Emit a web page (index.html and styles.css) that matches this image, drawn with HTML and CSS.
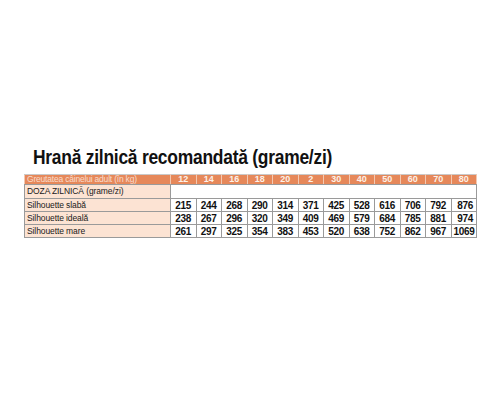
FILE: index.html
```html
<!DOCTYPE html>
<html lang="ro">
<head>
<meta charset="utf-8">
<title>Hrană zilnică recomandată</title>
<link rel="stylesheet" href="styles.css">
</head>
<body>
<div class="page">
  <h1 class="title">Hrană zilnică recomandată (grame/zi)</h1>
  <table class="feed">
    <colgroup>
      <col class="c-label">
      <col span="12" class="c-num">
    </colgroup>
    <thead>
      <tr class="head">
        <th class="label">Greutatea câinelui adult (în kg)</th>
        <th>12</th><th>14</th><th>16</th><th>18</th><th>20</th><th>2</th><th>30</th><th>40</th><th>50</th><th>60</th><th>70</th><th>80</th>
      </tr>
    </thead>
    <tbody>
      <tr class="sub">
        <td class="label">DOZA ZILNICĂ (grame/zi)</td>
        <td colspan="12" class="blank"></td>
      </tr>
      <tr>
        <td class="label">Silhouette slabă</td>
        <td>215</td><td>244</td><td>268</td><td>290</td><td>314</td><td>371</td><td>425</td><td>528</td><td>616</td><td>706</td><td>792</td><td class="last">876</td>
      </tr>
      <tr>
        <td class="label">Silhouette ideală</td>
        <td>238</td><td>267</td><td>296</td><td>320</td><td>349</td><td>409</td><td>469</td><td>579</td><td>684</td><td>785</td><td>881</td><td class="last">974</td>
      </tr>
      <tr>
        <td class="label">Silhouette mare</td>
        <td>261</td><td>297</td><td>325</td><td>354</td><td>383</td><td>453</td><td>520</td><td>638</td><td>752</td><td>862</td><td>967</td><td class="last">1069</td>
      </tr>
    </tbody>
  </table>
</div>
</body>
</html>
```
FILE: styles.css
```css
html, body {
  margin: 0;
  padding: 0;
  background: #ffffff;
}

.page {
  padding: 144px 24px 0 24px;
  font-family: "Liberation Sans", sans-serif;
}

.title {
  margin: 0 0 4px 9px;
  font-family: "Liberation Sans", sans-serif;
  font-weight: bold;
  font-size: 21px;
  line-height: 26px;
  letter-spacing: -0.3px;
  color: #111111;
  transform: scaleX(0.83);
  transform-origin: left center;
  white-space: nowrap;
}

.feed {
  width: 452px;
  border-collapse: collapse;
  table-layout: fixed;
  font-size: 8.5px;
}

.c-label { width: 146px; }
.c-num { width: 25.5px; }

.feed th,
.feed td {
  border: 1px solid #9a9a9a;
  padding: 0 2px;
  height: 12px;
  line-height: 11px;
  white-space: nowrap;
  overflow: hidden;
}

.head th {
  background: #e6885a;
  color: #fdf1e8;
  font-weight: bold;
  font-size: 9px;
  height: 9px;
  line-height: 9px;
  border-color: #f3c9b2;
  border-top-color: #c9c9c9;
  border-bottom-color: #9a9a9a;
  text-align: center;
}

.head th.label {
  text-align: left;
  font-weight: normal;
  font-size: 8.5px;
  letter-spacing: -0.2px;
  color: #f9dccb;
}

.feed td {
  text-align: center;
  font-weight: bold;
  font-size: 10px;
  letter-spacing: -0.3px;
  color: #111111;
  background: #ffffff;
}

.feed td.label {
  text-align: left;
  font-weight: normal;
  font-size: 8.5px;
  letter-spacing: -0.1px;
  background: #fce3d3;
  color: #1a1a1a;
}

.sub td {
  height: 13px;
}

.feed td.last {
  text-align: right;
  padding-right: 3px;
}
```
